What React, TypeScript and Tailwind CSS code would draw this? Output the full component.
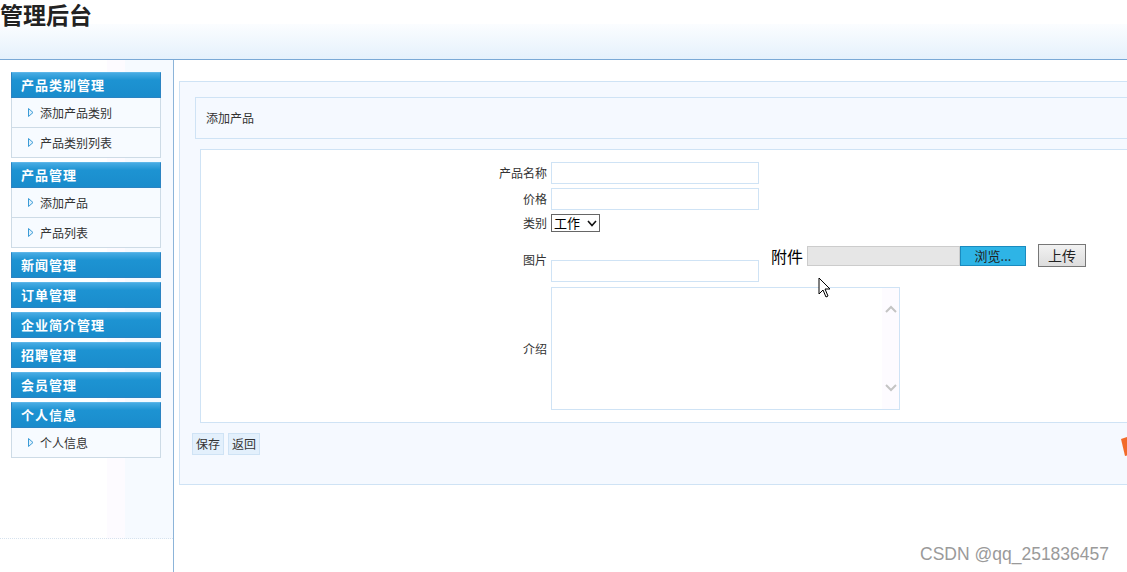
import React from 'react';

const font = { fontFamily: '"Noto Sans CJK SC", "Noto Sans", sans-serif' };

const menu = [
  { title: '产品类别管理', items: ['添加产品类别', '产品类别列表'] },
  { title: '产品管理', items: ['添加产品', '产品列表'] },
  { title: '新闻管理', items: [] },
  { title: '订单管理', items: [] },
  { title: '企业简介管理', items: [] },
  { title: '招聘管理', items: [] },
  { title: '会员管理', items: [] },
  { title: '个人信息', items: ['个人信息'] },
];

const Arrow = () => (
  <svg width="6" height="9" viewBox="0 0 6 9" className="shrink-0">
    <path d="M0.5 0.5 L5 4.5 L0.5 8.5 Z" fill="#dff0fb" stroke="#3b9bd6" strokeWidth="1" />
  </svg>
);

const MenuGroup = ({ title, items }: { title: string; items: string[] }) => (
  <div className="mb-[4px]">
    <div className="h-[26px] border border-[#2a83c2] border-t-[#5cb6e8] bg-[linear-gradient(#47abe3,#1d93d2_30%,#1a8ccc)] flex items-center pl-[9px] text-[13px] font-bold text-white tracking-[1px]">
      {title}
    </div>
    {items.map((it) => (
      <div
        key={it}
        className="h-[30px] border-x border-b border-[#cddbe6] bg-[#f7fbff] flex items-center pl-[16px] gap-[6px] text-[12px] text-[#333]"
      >
        <Arrow />
        <span>{it}</span>
      </div>
    ))}
  </div>
);

const Label = ({ children }: { children: React.ReactNode }) => (
  <div className="flex items-center justify-end text-[12px] text-[#333]">{children}</div>
);

const App = () => {
  return (
    <div className="relative w-[1127px] h-[572px] overflow-hidden bg-white" style={font}>
      <div className="h-[24px] text-[23px] leading-[28px] font-bold text-[#222]">管理后台</div>
      <div className="h-[36px] bg-[linear-gradient(#fbfdff,#e5f1fc)] border-b border-[#7aa9d6]" />

      <div className="flex h-[512px]">
        <aside className="w-[174px] shrink-0 border-r border-[#8cb4d9] flex flex-col">
          <div className="h-[479px] border-b border-dotted border-[#d6e2ee] bg-[linear-gradient(to_right,#ffffff_0,#ffffff_107px,#fdfbff_107px,#fdfbff_125px,#f6faff_125px)] pt-[12px] px-[11px]">
            <div className="w-[150px]">
              {menu.map((g) => (
                <MenuGroup key={g.title} title={g.title} items={g.items} />
              ))}
            </div>
          </div>
        </aside>

        <main className="flex-1 pt-[21px] pl-[5px]">
          <div className="h-[404px] border border-r-0 border-[#cfe3f5] bg-[#f5f9ff] pt-[15px] pl-[15px]">
            <div className="h-[42px] border border-r-0 border-[#cfe3f5] bg-[#f5f9ff] flex items-center pl-[10px] text-[12px] text-[#333]">
              添加产品
            </div>

            <div className="mt-[10px] ml-[5px] h-[274px] border border-r-0 border-[#cfe3f5] bg-white pt-[12px]">
              <div className="grid grid-cols-[346px_1fr] gap-x-[4px] gap-y-[4px] grid-rows-[22px_22px_18px_47px_123px]">
                <Label>产品名称</Label>
                <div className="w-[208px] h-[22px] border border-[#cfe3f5] bg-white" />

                <Label>价格</Label>
                <div className="w-[208px] h-[22px] border border-[#cfe3f5] bg-white" />

                <Label>类别</Label>
                <div className="w-[49px] h-[18px] border border-[#666] bg-white flex items-center justify-between px-[2px] text-[13px] text-black leading-[16px]">
                  <span>工作</span>
                  <svg width="10" height="7" viewBox="0 0 10 7">
                    <path d="M1 1 L5 5.5 L9 1" fill="none" stroke="#111" strokeWidth="1.6" />
                  </svg>
                </div>

                <Label>图片</Label>
                <div className="flex items-end">
                  <div className="w-[208px] h-[22px] mb-[1px] border border-[#cfe3f5] bg-white" />
                  <div className="self-start mt-[8px] ml-[12px] flex items-center">
                    <span className="text-[16px] text-black leading-none mr-[4px]">附件</span>
                    <div className="w-[153px] h-[20px] border border-[#cccccc] bg-[#e6e6e6]" />
                    <div className="w-[66px] h-[20px] border border-[#1a8bbf] bg-[#2eb4e6] flex items-center justify-center text-[13px] text-[#222]">
                      浏览...
                    </div>
                    <div className="ml-[12px] w-[48px] h-[23px] border border-[#777] bg-[linear-gradient(#f2f2f2,#dddddd)] flex items-center justify-center text-[14px] text-[#222]">
                      上传
                    </div>
                  </div>
                </div>

                <Label>介绍</Label>
                <div className="w-[349px] h-[123px] border border-[#cfe3f5] bg-white flex justify-end">
                  <div className="w-[17px] bg-[#fdfbff] flex flex-col items-center justify-between py-[17px]">
                    <svg width="12" height="8" viewBox="0 0 12 8">
                      <path d="M1 7 L6 2 L11 7" fill="none" stroke="#c4c4c4" strokeWidth="2" />
                    </svg>
                    <svg width="12" height="8" viewBox="0 0 12 8">
                      <path d="M1 1 L6 6 L11 1" fill="none" stroke="#c4c4c4" strokeWidth="2" />
                    </svg>
                  </div>
                </div>
              </div>
            </div>

            <div className="mt-[10px] -ml-[3px] flex gap-[4px]">
              <div className="h-[22px] px-[3px] border border-[#cfe3f5] bg-[#e3f0fc] flex items-center text-[12px] text-[#333]">保存</div>
              <div className="h-[22px] px-[3px] border border-[#cfe3f5] bg-[#e3f0fc] flex items-center text-[12px] text-[#333]">返回</div>
            </div>
          </div>
        </main>
      </div>

      <svg className="absolute left-[1121px] top-[437px]" width="8" height="20" viewBox="0 0 8 20">
        <path d="M0 2 L6 0 L8 18 L4 19 Z" fill="#f26b2a" />
      </svg>

      <svg className="absolute left-[818px] top-[277px]" width="14" height="22" viewBox="0 0 14 22">
        <path d="M1 1 L1 17 L5 13 L8 20 L10 19 L7 12 L12 12 Z" fill="#fff" stroke="#000" strokeWidth="1" />
      </svg>

      <div
        className="absolute left-[920px] top-[541px] text-[17.5px] text-[#9a9a9a]"
        style={{ fontFamily: '"Liberation Sans", Arial, sans-serif' }}
      >
        CSDN @qq_251836457
      </div>
    </div>
  );
};

export default App;
